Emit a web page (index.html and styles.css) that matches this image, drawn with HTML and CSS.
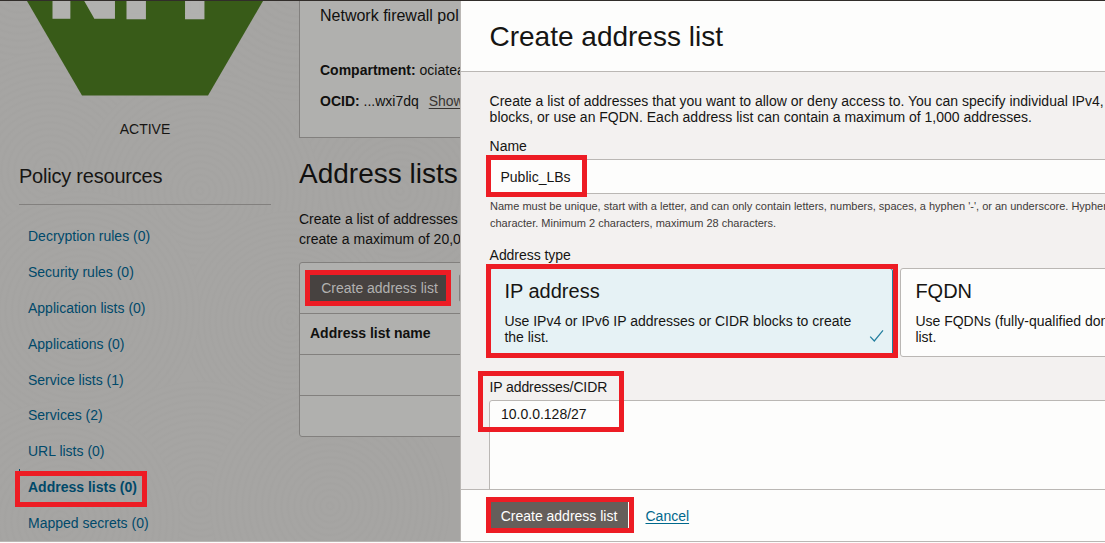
FILE: index.html
```html
<!DOCTYPE html>
<html lang="en">
<head>
<meta charset="utf-8">
<title>Create address list</title>
<link rel="stylesheet" href="styles.css">
</head>
<body>
<div class="app">
  <svg class="texture" width="460" height="541" viewBox="0 0 460 541" aria-hidden="true">
    <defs>
      <radialGradient id="rings" cx=".5" cy=".5" r=".027" spreadMethod="repeat">
        <stop offset="0" stop-color="#a7a6a4"/>
        <stop offset=".5" stop-color="#a4a3a1"/>
        <stop offset="1" stop-color="#a7a6a4"/>
      </radialGradient>
    </defs>
    <g fill="url(#rings)">
      <circle cx="20" cy="-20" r="130"/><circle cx="300" cy="-30" r="130"/>
      <circle cx="400" cy="190" r="130"/><circle cx="50" cy="170" r="120"/>
      <circle cx="200" cy="190" r="120"/><circle cx="290" cy="320" r="110"/>
      <circle cx="80" cy="310" r="120"/><circle cx="200" cy="500" r="120"/>
      <circle cx="60" cy="520" r="120"/><circle cx="330" cy="505" r="120"/>
    </g>
  </svg>

  <aside class="sidebar">
    <svg class="logo" width="236" height="95" viewBox="27 1 236 95" role="img" aria-label="NFP">
      <path class="logo-shape" d="M27 1H263L208 95.5H82Z"/>
      <text class="logo-text" y="15.5" x="48.8 122.8 181.3">NFP</text>
    </svg>
    <div class="status">ACTIVE</div>
    <h2 class="sidebar-title">Policy resources</h2>
    <nav class="nav">
      <a>Decryption rules (0)</a>
      <a>Security rules (0)</a>
      <a>Application lists (0)</a>
      <a>Applications (0)</a>
      <a>Service lists (1)</a>
      <a>Services (2)</a>
      <a>URL lists (0)</a>
      <a class="active">Address lists (0)</a>
      <a>Mapped secrets (0)</a>
    </nav>
  </aside>

  <main class="content">
    <section class="details">
      <p class="details-lead">Network firewall pol</p>
      <p class="details-row"><b>Compartment:</b> ociatea</p>
      <p class="details-row"><b>OCID:</b> ...wxi7dq <a class="show">Show</a></p>
    </section>
    <h1 class="page-title">Address lists</h1>
    <p class="intro">Create a list of addresses<br>create a maximum of 20,0</p>
    <section class="table">
      <div class="toolbar"><span class="btn btn-dim">Create address list</span><span class="btn-next"></span></div>
      <div class="row head">Address list name</div>
      <div class="row"></div>
      <div class="row"></div>
    </section>
  </main>

  <section class="drawer">
    <header class="drawer-head">Create address list</header>
    <div class="drawer-body">
      <p class="desc">Create a list of addresses that you want to allow or deny access to. You can specify individual IPv4,<br>blocks, or use an FQDN. Each address list can contain a maximum of 1,000 addresses.</p>
      <div class="label">Name</div>
      <div class="input">Public_LBs</div>
      <p class="help">Name must be unique, start with a letter, and can only contain letters, numbers, spaces, a hyphen '-', or an underscore. Hyphen<br>character. Minimum 2 characters, maximum 28 characters.</p>
      <div class="label label-type">Address type</div>
      <div class="cards">
        <div class="card selected">
          <h3>IP address</h3>
          <p>Use IPv4 or IPv6 IP addresses or CIDR blocks to create<br>the list.</p>
          <svg class="check" width="16" height="14" viewBox="0 0 16 14"><path d="M1.2 7.6 5.3 12 14 1.3"/></svg>
        </div>
        <div class="card">
          <h3>FQDN</h3>
          <p>Use FQDNs (fully-qualified domain<br>list.</p>
        </div>
      </div>
      <div class="label label-cidr">IP addresses/CIDR</div>
      <div class="textarea">10.0.0.128/27</div>
    </div>
    <footer class="drawer-foot">
      <span class="btn">Create address list</span>
      <a class="cancel">Cancel</a>
    </footer>
  </section>

  <i class="mark mark-nav"></i>
  <i class="mark mark-create"></i>
  <i class="mark mark-name"></i>
  <i class="mark mark-type"></i>
  <i class="mark mark-cidr"></i>
  <i class="mark mark-submit"></i>
</div>
</body>
</html>
```
FILE: styles.css
```css
* { box-sizing: border-box; margin: 0; padding: 0; }

body {
  width: 1105px;
  height: 543px;
  overflow: hidden;
  background: #fdfdfc;
  font: 14px/16px "Liberation Sans", Arial, sans-serif;
  color: #161513;
}

.app {
  position: relative;
  display: flex;
  width: 1105px;
  height: 542px;
  overflow: hidden;
  border-top: 1px solid #312d2a;
  border-bottom: 1px solid #bab7b4;
  background: #a6a5a3;
  white-space: nowrap;
}

.texture { position: absolute; left: 0; top: 0; opacity: .75; }

/* Sidebar */
.sidebar { position: relative; flex: none; width: 299px; padding-left: 19px; }
.logo { display: block; margin-left: 8px; }
.logo-shape { fill: #385b18; }
.logo-text { font: 700 97px "Liberation Sans", Arial, sans-serif; fill: #b1b1af; stroke: #b1b1af; stroke-width: 5.4px; }
.status { width: 252px; margin-top: 25px; text-align: center; }
.sidebar-title {
  width: 252px;
  height: 41px;
  margin-top: 27px;
  border-bottom: 1px solid #82807e;
  font-size: 20px;
  font-weight: 400;
  line-height: 24px;
  letter-spacing: -.22px;
}
.nav { display: grid; grid-auto-rows: 35.9px; margin-top: 13px; color: #00496a; }
.nav a { padding-left: 9px; line-height: 36px; }
.nav .active { font-weight: 700; border-left: 1px solid #00496a; padding-left: 8px; }

/* Page content */
.content { position: relative; flex: none; width: 161px; overflow: hidden; color: #11100f; }
.details {
  width: 700px;
  height: 137px;
  padding: 6px 20px 0;
  border: solid #82807e;
  border-width: 0 0 1px 1px;
  background: #b0b0ae;
}
.details-lead { font-size: 16px; line-height: 18px; margin-bottom: 37px; }
.details-row { margin-bottom: 15px; }
.show { margin-left: 6px; color: #383432; text-decoration: underline; text-underline-offset: 2px; }
.page-title { margin-top: 20px; font-size: 28px; font-weight: 400; line-height: 32px; }
.intro { margin-top: 19px; line-height: 20px; }
.table {
  width: 700px;
  height: 175px;
  margin-top: 13px;
  border: 1px solid #82807e;
  border-radius: 3px;
  background: #b0b0ae;
}
.toolbar { display: flex; height: 50px; padding: 11px 10px 0; gap: 13px; }
.row { height: 41px; padding-left: 10px; border-top: 1px solid #82807e; line-height: 39px; }
.head { font-weight: 700; }

.btn {
  width: 138px;
  height: 28px;
  background: #655e5a;
  color: #fff;
  text-align: center;
  line-height: 28px;
}
.btn-dim { width: 136px; background: #474240; color: #b2b1b0; line-height: 29px; padding-left: 3px; }
.btn-next { width: 40px; height: 28px; border: 1px solid #82807e; border-radius: 2px; }

/* Drawer */
.drawer {
  position: relative;
  display: flex;
  flex-direction: column;
  flex: none;
  width: 645px;
  border-left: 1px solid #bab7b4;
  background: #f3f1f0;
}
.drawer-head {
  height: 71px;
  padding: 20px 0 0 28.5px;
  border-bottom: 1px solid #bab7b4;
  background: #fdfdfc;
  font-size: 28px;
  line-height: 32px;
}
.drawer-body { flex: 1; min-height: 0; overflow: hidden; padding: 21px 0 0 28px; }
.desc, .label { padding-left: .6px; }
.label { margin-top: 13px; letter-spacing: -.05px; }
.input {
  width: 700px;
  height: 35px;
  margin-top: 5px;
  padding-left: 10.5px;
  border: 1px solid #bab7b4;
  border-radius: 2px;
  background: #fdfdfc;
  line-height: 34px;
}
.help { margin-top: 4px; padding-left: 1px; font-size: 11px; line-height: 17px; color: #3f3b39; }
.label-type { margin-top: 15px; }
.cards { display: flex; gap: 7px; margin-top: 5px; }
.card {
  position: relative;
  flex: none;
  width: 404px;
  height: 89px;
  padding: 10px 14.4px;
  border: 1px solid #bab7b4;
  border-radius: 3px;
  background: #fdfdfc;
}
.card h3 { margin-bottom: 10px; font-size: 20px; font-weight: 400; line-height: 24px; }
.selected { border-color: #227e9e; background: #e6f2f5; }
.check { position: absolute; right: 7px; bottom: 13px; fill: none; stroke: #227e9e; stroke-width: 1.2; }
.label-cidr { margin-top: 22px; letter-spacing: -.12px; }
.textarea {
  width: 700px;
  height: 120px;
  margin-top: 5px;
  padding: 5px 11px;
  border: 1px solid #bab7b4;
  border-radius: 3px;
  background: #fdfdfc;
}
.drawer-foot {
  display: flex;
  align-items: flex-start;
  gap: 17.5px;
  height: 52px;
  padding: 12px 0 0 29px;
  border-top: 1px solid #bab7b4;
  background: #fdfdfc;
}
.cancel { line-height: 28px; color: #00688c; text-decoration: underline; text-underline-offset: 2px; }

/* Highlight frames over the controls */
.mark { position: absolute; border: 5px solid #ed1c24; }
.mark-nav { left: 15px; top: 470px; width: 132px; height: 36px; }
.mark-create { left: 305px; top: 269px; width: 146px; height: 36px; }
.mark-name { left: 486px; top: 154px; width: 101px; height: 42px; }
.mark-type { left: 486px; top: 263px; width: 412px; height: 94px; }
.mark-cidr { left: 478px; top: 370px; width: 146px; height: 61px; }
.mark-submit { left: 486px; top: 496px; width: 148px; height: 36px; }
```
